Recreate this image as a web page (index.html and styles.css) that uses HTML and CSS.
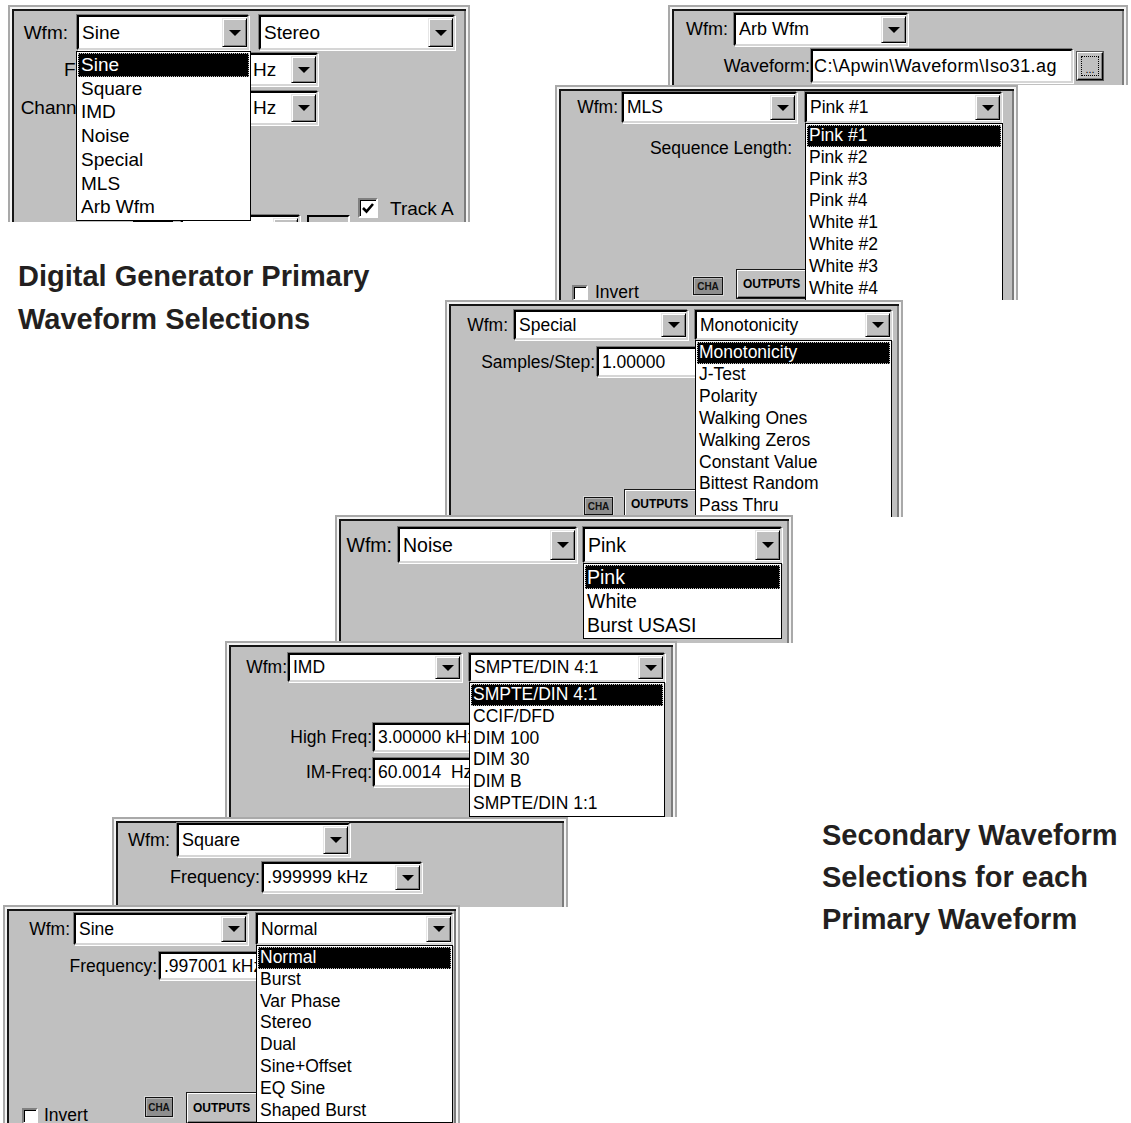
FILE: index.html
```html
<!DOCTYPE html>
<html lang="en">
<head>
<meta charset="utf-8">
<title>Digital Generator Waveform Selections</title>
<link rel="stylesheet" href="styles.css">
</head>
<body>
<div class="canvas">

  <section class="panel pa">
    <div class="row a1">
      <span class="lbl">Wfm:</span>
      <div class="combo wfm">
        <span class="val">Sine</span><span class="btn"><i class="arr"></i></span>
        <ul class="list">
          <li class="sel">Sine</li><li>Square</li><li>IMD</li><li>Noise</li><li>Special</li><li>MLS</li><li>Arb Wfm</li>
        </ul>
      </div>
      <div class="combo sub"><span class="val">Stereo</span><span class="btn"><i class="arr"></i></span></div>
    </div>
    <div class="row a2">
      <span class="lbl">Frequency:</span>
      <div class="combo frq"><span class="val">997.001 Hz</span><span class="btn"><i class="arr"></i></span></div>
    </div>
    <div class="row a3">
      <span class="lbl">Channel B Freq:</span>
      <div class="combo frq"><span class="val">997.001 Hz</span><span class="btn"><i class="arr"></i></span></div>
    </div>
    <div class="row a4 bottom">
      <span class="blk"></span>
      <div class="combo mini"><span class="val"></span><span class="btn"><i class="arr"></i></span></div>
      <span class="rbox"></span>
      <span class="chk"><svg viewBox="0 0 16 16" width="16" height="16"><polyline points="3,8 6.5,11.5 13,4" fill="none" stroke="#000" stroke-width="2.6"/></svg></span>
      <span class="track">Track A</span>
    </div>
  </section>

  <section class="panel pb">
    <div class="row b1">
      <span class="lbl">Wfm:</span>
      <div class="combo wfm"><span class="val">Arb Wfm</span><span class="btn"><i class="arr"></i></span></div>
    </div>
    <div class="row b2">
      <span class="lbl">Waveform:</span>
      <div class="tbox path"><span class="val">C:\Apwin\Waveform\Iso31.ag</span></div>
      <span class="dots"><span class="focus">...</span></span>
    </div>
  </section>

  <section class="panel pc">
    <div class="row c1">
      <span class="lbl">Wfm:</span>
      <div class="combo wfm"><span class="val">MLS</span><span class="btn"><i class="arr"></i></span></div>
      <div class="combo sub">
        <span class="val">Pink #1</span><span class="btn"><i class="arr"></i></span>
        <ul class="list">
          <li class="sel">Pink #1</li><li>Pink #2</li><li>Pink #3</li><li>Pink #4</li><li>White #1</li><li>White #2</li><li>White #3</li><li>White #4</li>
        </ul>
      </div>
    </div>
    <div class="row c2"><span class="lbl">Sequence Length:</span></div>
    <div class="row c3 bottom">
      <span class="chk"></span>
      <span class="inv">Invert</span>
      <span class="cha">CHA</span>
      <span class="outputs">OUTPUTS</span>
    </div>
  </section>

  <section class="panel pd">
    <div class="row d1">
      <span class="lbl">Wfm:</span>
      <div class="combo wfm"><span class="val">Special</span><span class="btn"><i class="arr"></i></span></div>
      <div class="combo sub">
        <span class="val">Monotonicity</span><span class="btn"><i class="arr"></i></span>
        <ul class="list">
          <li class="sel">Monotonicity</li><li>J-Test</li><li>Polarity</li><li>Walking Ones</li><li>Walking Zeros</li><li>Constant Value</li><li>Bittest Random</li><li>Pass Thru</li>
        </ul>
      </div>
    </div>
    <div class="row d2">
      <span class="lbl">Samples/Step:</span>
      <div class="tbox tb"><span class="val">1.00000</span></div>
    </div>
    <div class="row d3 bottom">
      <span class="cha">CHA</span>
      <span class="outputs">OUTPUTS</span>
    </div>
  </section>

  <section class="panel pe">
    <div class="row e1">
      <span class="lbl">Wfm:</span>
      <div class="combo wfm"><span class="val">Noise</span><span class="btn"><i class="arr"></i></span></div>
      <div class="combo sub">
        <span class="val">Pink</span><span class="btn"><i class="arr"></i></span>
        <ul class="list">
          <li class="sel">Pink</li><li>White</li><li>Burst USASI</li>
        </ul>
      </div>
    </div>
  </section>

  <section class="panel pf">
    <div class="row f1">
      <span class="lbl">Wfm:</span>
      <div class="combo wfm"><span class="val">IMD</span><span class="btn"><i class="arr"></i></span></div>
      <div class="combo sub">
        <span class="val">SMPTE/DIN 4:1</span><span class="btn"><i class="arr"></i></span>
        <ul class="list">
          <li class="sel">SMPTE/DIN 4:1</li><li>CCIF/DFD</li><li>DIM 100</li><li>DIM 30</li><li>DIM B</li><li>SMPTE/DIN 1:1</li>
        </ul>
      </div>
    </div>
    <div class="row f2">
      <span class="lbl">High Freq:</span>
      <div class="tbox tb"><span class="val">3.00000 kHz</span></div>
    </div>
    <div class="row f3">
      <span class="lbl">IM-Freq:</span>
      <div class="tbox tb"><span class="val">60.0014&nbsp; Hz</span></div>
    </div>
  </section>

  <section class="panel pg">
    <div class="row g1">
      <span class="lbl">Wfm:</span>
      <div class="combo wfm"><span class="val">Square</span><span class="btn"><i class="arr"></i></span></div>
    </div>
    <div class="row g2">
      <span class="lbl">Frequency:</span>
      <div class="combo frq"><span class="val">.999999 kHz</span><span class="btn"><i class="arr"></i></span></div>
    </div>
  </section>

  <section class="panel ph">
    <div class="row h1">
      <span class="lbl">Wfm:</span>
      <div class="combo wfm"><span class="val">Sine</span><span class="btn"><i class="arr"></i></span></div>
      <div class="combo sub">
        <span class="val">Normal</span><span class="btn"><i class="arr"></i></span>
        <ul class="list">
          <li class="sel">Normal</li><li>Burst</li><li>Var Phase</li><li>Stereo</li><li>Dual</li><li>Sine+Offset</li><li>EQ Sine</li><li>Shaped Burst</li>
        </ul>
      </div>
    </div>
    <div class="row h2">
      <span class="lbl">Frequency:</span>
      <div class="tbox tb"><span class="val">.997001 kHz</span></div>
    </div>
    <div class="row h3 bottom">
      <span class="chk"></span>
      <span class="inv">Invert</span>
      <span class="cha">CHA</span>
      <span class="outputs">OUTPUTS</span>
    </div>
  </section>

  <p class="cap cap-l">Digital Generator Primary<br>Waveform Selections</p>
  <p class="cap cap-r">Secondary Waveform<br>Selections for each<br>Primary Waveform</p>

</div>
</body>
</html>
```

FILE: styles.css
```css
* { box-sizing: border-box; margin: 0; padding: 0; }
html, body { background: #fff; }
body {
  width: 1131px; height: 1123px; overflow: hidden;
  font-family: "Liberation Sans", Arial, sans-serif; color: #000;
}
.canvas { position: relative; width: 1131px; height: 1123px; }

/* window fragments on the canvas */
.panel {
  position: absolute; overflow: hidden;
  background: #c0c0c0;
  border: 2px solid #a9a9a9; border-bottom: 0;
  padding: 4px 4px 0 4px;
  box-shadow: inset 2px 2px 0 #f4f4f4, inset -2px 0 0 #f4f4f4,
              inset 4px 4px 0 #161616, inset -4px 0 0 #7c7c7c;
}
.pa { left: 8px;   top: 5px;   width: 462px; height: 217px; font-size: 19px;   z-index: 1; }
.pb { left: 668px; top: 5px;   width: 460px; height: 80px;  font-size: 18px;   z-index: 2; }
.pc { left: 555px; top: 85px;  width: 463px; height: 215px; font-size: 17.5px; z-index: 3; }
.pd { left: 445px; top: 300px; width: 458px; height: 217px; font-size: 17.5px; z-index: 4; }
.pe { left: 335px; top: 515px; width: 458px; height: 128px; font-size: 19.5px; z-index: 5; }
.pf { left: 225px; top: 641px; width: 452px; height: 176px; font-size: 17.5px; z-index: 6; }
.pg { left: 112px; top: 817px; width: 456px; height: 90px;  font-size: 18px;   z-index: 7; }
.ph { left: 3px;   top: 905px; width: 457px; height: 218px; font-size: 17.5px; z-index: 8; }

.row { display: flex; align-items: center; }
.row.bottom { align-items: flex-start; }
.lbl { flex: none; text-align: right; white-space: nowrap; }

/* combo boxes / text boxes */
.combo, .tbox {
  position: relative; flex: none;
  display: flex; align-items: center;
  background: #fff;
  border: 2px solid; border-color: #000 #d6d6d6 #d6d6d6 #000;
  box-shadow: -1px -1px 0 #7b7b7b, 1px 1px 0 #fff;
  padding-left: 3px;
}
.val { flex: 1; white-space: nowrap; overflow: hidden; }
.btn {
  flex: none; align-self: stretch; width: 25px; margin: 1px 0;
  display: flex; align-items: center; justify-content: center;
  background: #c0c0c0;
  border: 1px solid; border-color: #e6e6e6 #000 #000 #e6e6e6;
  box-shadow: inset 1px 1px 0 #fff, inset -1px -1px 0 #808080;
}
.arr {
  width: 0; height: 0;
  border-left: 6px solid transparent; border-right: 6px solid transparent;
  border-top: 6px solid #000;
}

/* open drop-down lists */
.list {
  position: absolute; left: -2px; right: -2px; top: calc(100% + 2px);
  z-index: 5; list-style: none;
  background: #fff; border: 1px solid #000; padding: 1px;
}
.list li { padding-left: 2px; white-space: nowrap; line-height: 21.8px; }
.list li.sel { background: #000; color: #fff; outline: 1px dotted #bdbdbd; outline-offset: -1px; }

/* small controls */
.chk {
  flex: none; width: 16px; height: 16px; background: #fff;
  border: 2px solid; border-color: #808080 #fff #fff #808080;
  box-shadow: inset 1px 1px 0 #000;
  display: flex; align-items: center; justify-content: center;
}
.chk svg { display: block; }
.inv { flex: none; width: 50px; white-space: nowrap; }
.cha {
  flex: none; width: 30px; height: 18px;
  display: flex; align-items: center; justify-content: center;
  background: #8e8e8e; border: 1px solid #111;
  box-shadow: 0 0 0 1px #d8d8d8, inset 1px 1px 0 #b8b8b8;
  font: bold 10px "Liberation Sans", Arial, sans-serif; color: #111;
}
.outputs {
  flex: none; width: 75px; height: 28px;
  display: flex; align-items: center; padding-left: 5px;
  background: #c0c0c0;
  border: 1px solid; border-color: #fff #000 #000 #fff;
  box-shadow: 0 0 0 1px #1a1a1a, inset -1px -1px 0 #808080;
  font: bold 12px "Liberation Sans", Arial, sans-serif;
}

/* panel A : primary list */
.pa .a1 { margin-top: 4px; }
.pa .a1 .lbl { width: 54px; margin-right: 9px; }
.pa .wfm { width: 172px; height: 35px; padding-left: 3px; }
.pa .sub { width: 196px; height: 35px; margin-left: 10px; }
.pa .list { left: -3px; right: -4px; top: calc(100% + 3px); }
.pa .list li { line-height: 23.7px; padding-left: 3px; }
.pa .a2 { margin-top: 3px; }
.pa .a3 { margin-top: 5px; }
.pa .a2 .lbl, .pa .a3 .lbl { width: 145px; margin-right: 15px; }
.pa .frq { width: 144px; height: 33px; }
.pa .a3 .frq { height: 34px; }
.pa .a4 { margin-top: 73px; }
.pa .blk { flex: none; margin: 17px 0 0 119px; width: 40px; height: 14px; background: #000; }
.pa .mini { margin: 17px 0 0 8px; width: 119px; height: 30px; }
.pa .rbox {
  flex: none; margin: 17px 0 0 7px; width: 43px; height: 30px;
  background: #c0c0c0; border: 2px solid; border-color: #000 #fff #fff #000;
}
.pa .a4 .chk { margin: 0 0 0 8px; width: 20px; height: 20px; }
.pa .track { margin-left: 12px; line-height: 22px; white-space: nowrap; }

/* panel B : arb wfm */
.pb .b1 { margin-top: 2px; }
.pb .b1 .lbl { width: 54px; margin-right: 6px; }
.pb .wfm { width: 174px; height: 33px; }
.pb .b2 { margin-top: 3px; }
.pb .b2 .lbl { width: 136px; margin-right: 1px; }
.pb .path { width: 262px; height: 34px; padding-left: 1px; letter-spacing: 0.4px; }
.pb .dots {
  flex: none; margin-left: 4px; width: 26px; height: 28px; padding: 3px;
  background: #c0c0c0;
  border: 1px solid; border-color: #fff #000 #000 #fff;
  box-shadow: 0 0 0 1px #555, inset -1px -1px 0 #808080;
}
.pb .focus {
  display: flex; align-items: flex-end; justify-content: center;
  width: 100%; height: 100%; border: 1px dotted #000;
  font-size: 11px; line-height: 12px;
}

/* panel C : MLS */
.pc .c1 { margin-top: 1px; }
.pc .c1 .lbl { width: 57px; margin-right: 4px; }
.pc .wfm { width: 175px; height: 31px; }
.pc .sub { width: 197px; height: 31px; margin-left: 8px; }
.pc .list { right: -3px; }
.pc .c2 { margin-top: 14px; height: 22px; }
.pc .c2 .lbl { width: 231px; }
.pc .c3 { margin-top: 111px; }
.pc .c3 .chk { margin: 15px 0 0 11px; }
.pc .c3 .inv { margin: 12px 0 0 7px; }
.pc .c3 .cha { margin: 7px 0 0 48px; }
.pc .c3 .outputs { margin-left: 14px; }

/* panel D : special */
.pd .d1 { margin-top: 4px; }
.pd .d1 .lbl { width: 57px; margin-right: 6px; }
.pd .wfm { width: 174px; height: 30px; }
.pd .sub { width: 197px; height: 30px; margin-left: 7px; }
.pd .list li { line-height: 21.9px; }
.pd .d2 { margin-top: 7px; }
.pd .d2 .lbl { width: 144px; margin-right: 2px; }
.pd .tb { width: 110px; height: 30px; }
.pd .d3 { margin-top: 113px; }
.pd .d3 .cha { margin: 7px 0 0 133px; width: 29px; }
.pd .d3 .outputs { margin-left: 12px; }

/* panel E : noise */
.pe .e1 { margin-top: 6px; }
.pe .e1 .lbl { width: 51px; margin-right: 6px; }
.pe .wfm { width: 179px; height: 36px; }
.pe .sub { width: 199px; height: 36px; margin-left: 6px; }
.pe .list li { line-height: 24px; }

/* panel F : IMD */
.pf .f1 { margin-top: 6px; }
.pf .f1 .lbl { width: 56px; margin-right: 1px; }
.pf .wfm { width: 174px; height: 29px; }
.pf .sub { width: 196px; height: 29px; margin-left: 7px; }
.pf .f2 { margin-top: 41px; }
.pf .f3 { margin-top: 6px; }
.pf .f2 .lbl, .pf .f3 .lbl { width: 141px; margin-right: 1px; }
.pf .tb { width: 110px; height: 29px; }

/* panel G : square */
.pg .g1 .lbl { width: 52px; margin-right: 7px; }
.pg .wfm { width: 173px; height: 34px; }
.pg .g2 { margin-top: 5px; }
.pg .g2 .lbl { width: 142px; margin-right: 2px; }
.pg .frq { width: 160px; height: 31px; }

/* panel H : sine */
.ph .h1 { margin-top: 2px; }
.ph .h1 .lbl { width: 61px; margin-right: 4px; }
.ph .wfm { width: 174px; height: 32px; }
.ph .sub { width: 197px; height: 32px; margin-left: 8px; }
.ph .h2 { margin-top: 7px; }
.ph .h2 .lbl { width: 148px; margin-right: 2px; }
.ph .tb { width: 110px; height: 28px; }
.ph .h3 { margin-top: 113px; }
.ph .h3 .chk { margin: 15px 0 0 13px; }
.ph .h3 .inv { margin: 12px 0 0 6px; }
.ph .h3 .cha { margin: 4px 0 0 51px; width: 28px; height: 20px; }
.ph .h3 .outputs { margin-left: 14px; height: 30px; }

/* captions */
.cap {
  position: absolute; white-space: nowrap;
  font: bold 29px/43px "Liberation Sans", Arial, sans-serif; color: #231f20;
}
.cap-l { left: 18px; top: 255px; }
.cap-r { left: 822px; top: 814px; line-height: 42px; }
```
